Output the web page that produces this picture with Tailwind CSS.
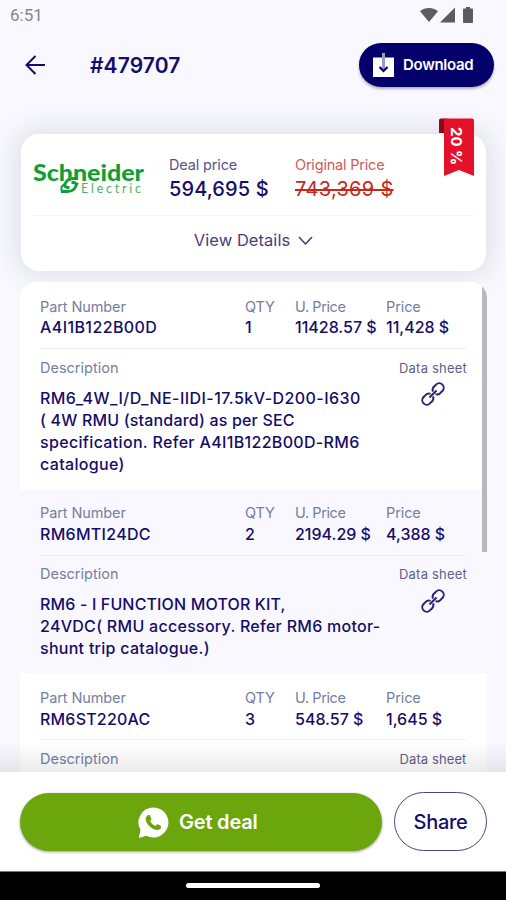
<!DOCTYPE html>
<html lang="en">
  <head>
    <meta charset="UTF-8" />
    <meta name="viewport" content="width=device-width, initial-scale=1.0" />
    <title>Deal #479707</title>
    <script src="https://cdn.jsdelivr.net/npm/@tailwindcss/browser@4"></script>
  </head>
  <body class="bg-black">
    <div
      class="flex h-[900px] w-[506px] flex-col overflow-hidden bg-[#f8f8fe] font-['Inter',sans-serif] text-[#150d68]"
    >
      <!-- Status bar -->
      <div class="flex h-8 shrink-0 items-center justify-between pr-[33px] pl-[10px]">
        <span class="font-['Roboto',sans-serif] text-[17px] text-[#858589]">6:51</span>
        <div class="flex items-center pb-[2px] text-[#5c5c60]">
          <svg class="h-4 w-[18px]" viewBox="0 0 18 16" fill="currentColor">
            <path d="M0 4.200C5.400 0 12.600 0 18 4.200L9 15z" />
          </svg>
          <svg class="ml-[2px] h-4 w-[15px]" viewBox="0 0 15 16" fill="currentColor">
            <path d="M15 0.500V15.500H0z" />
          </svg>
          <svg class="ml-[8px] h-4 w-[10px]" viewBox="0 0 10 16" fill="currentColor">
            <path d="M3 0h4v1.500h2Q10 1.500 10 2.500V15q0 1-1 1H1q-1 0-1-1V2.500Q0 1.500 1 1.500h2z" />
          </svg>
        </div>
      </div>

      <!-- Header -->
      <header class="flex h-[66px] shrink-0 items-center pr-[12px] pl-[25px]">
        <svg class="h-5 w-5" viewBox="0 0 20 20" fill="none" stroke="#150d68" stroke-width="2">
          <path d="M20 10H2M10.500 1L1.500 10l9 9" />
        </svg>
        <h1 class="ml-[45px] pt-[2px] text-[21px] font-semibold tracking-[0.1px]">#479707</h1>
        <button
          class="ml-auto flex h-[44px] w-[135px] items-center rounded-full bg-[#03006c] pl-[14px] text-[15px] font-semibold text-white shadow-[0_2px_3px_rgba(0,0,0,0.3)]"
        >
          <svg class="h-[24px] w-[21px]" viewBox="0 0 21 24" fill="none">
            <path d="M0 4.500h21V24H0z" fill="#fff" />
            <path d="M10.500 0v16" stroke="#9c9bc6" stroke-width="3" />
            <path d="M6.500 14l4 4 4-4" stroke="#03006c" stroke-width="2.200" />
          </svg>
          <span class="ml-[9px] tracking-[-0.3px]">Download</span>
        </button>
      </header>

      <main class="relative min-h-0 flex-1 overflow-hidden pt-[36px] pr-[19px] pl-5">
        <!-- Price summary -->
        <section
          class="relative mx-px h-[137px] rounded-[18px] bg-white px-3 shadow-[0_0_28px_4px_rgba(30,30,50,0.12)]"
        >
          <div class="flex h-[82px] border-b border-[#f3f3f6] pt-[20px]">
            <svg class="mt-[6px] h-[38px] w-[112px] shrink-0 overflow-visible" viewBox="0 0 112 38">
              <text x="0" y="20.500" textLength="111" lengthAdjust="spacingAndGlyphs" font-family="Lato" font-weight="900" font-size="22" fill="#0f9f36">Schneider</text>
              <text x="48" y="32.500" textLength="60" font-family="Lato" font-size="12.500" fill="#4fae68">Electric</text>
              <path d="M28 30Q27 21 34 18.500Q40 16 46 19.500L42 28Q36 34 28 30z" fill="#fff" />
              <g fill="none" stroke="#0f9f36" stroke-width="2.800">
                <path d="M45 18.500H41q-6.500 0-8.500 4.500q-2 4 2 4.500h2" />
                <path d="M28 31.500h6q6.500 0 8.500-4.500q2-4-2-4.500h-2" />
                <path d="M31.500 24l-3 3v4M43 26l2-3" stroke-width="2" />
              </g>
            </svg>
            <div class="ml-[24px] w-[126px]">
              <p class="text-[14.500px] leading-[21px] tracking-[-0.15px] text-[#5a5589]">Deal price</p>
              <p class="mt-[1px] text-[20px] leading-[27px] font-medium tracking-[0.1px]">594,695 $</p>
            </div>
            <div>
              <p class="text-[14.500px] leading-[21px] tracking-[-0.2px] text-[#cd5c58]">Original Price</p>
              <p class="mt-[1px] text-[20px] leading-[27px] tracking-[0.3px] text-[#c5281c] line-through decoration-2">743,369 $</p>
            </div>
          </div>
          <div class="flex h-[49px] items-center justify-center gap-[8px] text-[16.500px] tracking-[0.05px] text-[#46407d]">
            <span>View Details</span>
            <svg class="h-[9px] w-[15px]" viewBox="0 0 15 9" fill="none" stroke="currentColor" stroke-width="1.600">
              <path d="M1 1l6.500 7L14 1" />
            </svg>
          </div>

          <!-- Discount ribbon -->
          <div class="absolute top-[-16px] right-[12px] h-[59px] w-[36px]">
            <svg class="h-full w-full" viewBox="0 0 36 59">
              <path d="M1 2q0-1.500 2-1.500h6V15H1z" fill="#8d0a1a" />
              <path d="M6 0.500H34q2 0 2 2V58l-15-6-15 6z" fill="#e4112a" />
            </svg>
            <span
              class="absolute top-[9px] left-[9px] text-[15px] leading-[18px] font-bold whitespace-nowrap text-white [writing-mode:vertical-rl]"
              >20 %</span
            >
          </div>
        </section>

        <!-- Parts list -->
        <section class="relative mt-[11px] overflow-hidden rounded-t-[16px] bg-white">
          <article class="h-[208px] px-5 pt-[14px]">
            <div class="mr-px grid grid-cols-[205px_50px_91px_1fr] border-b border-[#f0f0f4] pb-[10px] text-[16px] leading-[21px] whitespace-nowrap">
              <span class="text-[14.500px] tracking-[-0.1px] text-[#74809f]">Part Number</span>
              <span class="text-[14.500px] tracking-[-0.1px] text-[#74809f]">QTY</span>
              <span class="text-[14.500px] tracking-[-0.4px] text-[#74809f]">U. Price</span>
              <span class="text-[14.500px] tracking-[-0.1px] text-[#74809f]">Price</span>
              <span class="font-medium tracking-[0.4px]">A4I1B122B00D</span>
              <span class="font-medium">1</span>
              <span class="font-medium">11428.57 $</span>
              <span class="font-medium">11,428 $</span>
            </div>
            <div class="flex justify-between pt-[9px]">
              <div>
                <p class="text-[14.500px] leading-[20px] text-[#74809f]">Description</p>
                <p class="mt-[8.500px] text-[16px] leading-[22.200px] font-medium tracking-[0.33px] whitespace-nowrap">
                  <span class="tracking-[0.45px]">RM6_4W_I/D_NE-IIDI-17.5kV-D200-I630</span><br /><span class="tracking-[0.18px]">( 4W RMU (standard) as per SEC</span><br />specification.
                  Refer A4I1B122B00D-RM6<br />catalogue)
                </p>
              </div>
              <div class="flex w-[68px] shrink-0 flex-col items-center">
                <p class="text-[13px] leading-[20px] tracking-[0.2px] whitespace-nowrap text-[#625d8d]">Data sheet</p>
                <svg class="mt-[4px] h-[24px] w-[24px]" viewBox="0 0 24 24" fill="none" stroke="#2b2474" stroke-width="2">
                  <g transform="rotate(-45 12 12)">
                    <path d="M10.300 10.200A4.500 4.500 0 0 0 6.300 7.500H3.200a4.500 4.500 0 0 0 0 9H6.300a4.500 4.500 0 0 0 4-2.700" />
                    <path d="M13.700 10.200A4.500 4.500 0 0 1 17.700 7.500h3.100a4.500 4.500 0 0 1 0 9H17.700a4.500 4.500 0 0 1-4-2.700" />
                    <path d="M7 12h10" />
                  </g>
                </svg>
              </div>
            </div>
          </article>

          <article class="h-[183px] bg-[#f8f8fe] px-5 pt-[12px]">
            <div class="mr-px grid grid-cols-[205px_50px_91px_1fr] border-b border-[#ededf3] pb-[10px] text-[16px] leading-[21.500px] whitespace-nowrap">
              <span class="text-[14.500px] tracking-[-0.1px] text-[#74809f]">Part Number</span>
              <span class="text-[14.500px] tracking-[-0.1px] text-[#74809f]">QTY</span>
              <span class="text-[14.500px] tracking-[-0.4px] text-[#74809f]">U. Price</span>
              <span class="text-[14.500px] tracking-[-0.1px] text-[#74809f]">Price</span>
              <span class="font-medium tracking-[0.3px]">RM6MTI24DC</span>
              <span class="font-medium">2</span>
              <span class="font-medium">2194.29 $</span>
              <span class="font-medium">4,388 $</span>
            </div>
            <div class="flex justify-between pt-[8px]">
              <div>
                <p class="text-[14.500px] leading-[20px] text-[#74809f]">Description</p>
                <p class="mt-[9px] text-[16px] leading-[22.200px] font-medium tracking-[0.28px] whitespace-nowrap">
                  <span class="tracking-[0.15px]">RM6 - I FUNCTION MOTOR KIT,</span><br />24VDC( RMU accessory. Refer RM6 motor-<br />shunt trip
                  catalogue.)
                </p>
              </div>
              <div class="flex w-[68px] shrink-0 flex-col items-center">
                <p class="text-[13px] leading-[20px] tracking-[0.2px] whitespace-nowrap text-[#625d8d]">Data sheet</p>
                <svg class="mt-[5px] h-[24px] w-[24px]" viewBox="0 0 24 24" fill="none" stroke="#2b2474" stroke-width="2">
                  <g transform="rotate(-45 12 12)">
                    <path d="M10.300 10.200A4.500 4.500 0 0 0 6.300 7.500H3.200a4.500 4.500 0 0 0 0 9H6.300a4.500 4.500 0 0 0 4-2.700" />
                    <path d="M13.700 10.200A4.500 4.500 0 0 1 17.700 7.500h3.100a4.500 4.500 0 0 1 0 9H17.700a4.500 4.500 0 0 1-4-2.700" />
                    <path d="M7 12h10" />
                  </g>
                </svg>
              </div>
            </div>
          </article>

          <article class="h-[183px] px-5 pt-[14px]">
            <div class="mr-px grid grid-cols-[205px_50px_91px_1fr] border-b border-[#f0f0f4] pb-[9px] text-[16px] leading-[21.500px] whitespace-nowrap">
              <span class="text-[14.500px] tracking-[-0.1px] text-[#74809f]">Part Number</span>
              <span class="text-[14.500px] tracking-[-0.1px] text-[#74809f]">QTY</span>
              <span class="text-[14.500px] tracking-[-0.4px] text-[#74809f]">U. Price</span>
              <span class="text-[14.500px] tracking-[-0.1px] text-[#74809f]">Price</span>
              <span class="font-medium tracking-[0.2px]">RM6ST220AC</span>
              <span class="font-medium">3</span>
              <span class="font-medium">548.57 $</span>
              <span class="font-medium">1,645 $</span>
            </div>
            <div class="flex justify-between pt-[9px]">
              <p class="text-[14.500px] leading-[20px] text-[#74809f]">Description</p>
              <p class="w-[68px] text-center text-[13px] leading-[20px] tracking-[0.1px] whitespace-nowrap text-[#625d8d]">Data sheet</p>
            </div>
          </article>

          <!-- Scroll thumb -->
          <div class="absolute top-0 right-0 h-[270px] w-[5px] bg-[#b9b9bb]"></div>
        </section>

        <div class="absolute inset-x-0 bottom-0 h-[30px] bg-linear-to-b from-transparent to-black/8"></div>
      </main>

      <!-- Actions -->
      <footer class="flex h-[99px] shrink-0 gap-[12px] bg-white px-5 pt-[20px]">
        <button
          class="mt-px flex h-[58px] w-[362px] shrink-0 items-center rounded-full bg-[#6ca60d] pl-[118px] text-[20px] font-semibold tracking-[-0.2px] text-white shadow-[0_1px_3px_rgba(0,0,0,0.4)]"
        >
          <svg class="h-[31px] w-[31px]" viewBox="0 0 31 31">
            <path d="M15.500 0.500a15 15 0 1 1-7 28.300L0.800 31l1.700-8A15 15 0 0 1 15.500 0.500z" fill="#fff" />
            <path
              d="M9.200 8.800c1-1.300 2.300-1.200 2.900 0l1.300 2.900c.3.700-.9 1.900-1.300 2.400 1.200 2.300 2.900 3.900 5.300 4.900.7-.7 1.500-2 2.200-1.800l3 1.500c1 .6.4 2.300-.5 3.200-2 1.900-5.500.9-8.100-.7-2.600-1.700-5.100-4.500-6-7.200-.6-2-.2-3.900 1.200-5.200z"
              fill="#6ca60d"
            />
          </svg>
          <span class="ml-[10px]">Get deal</span>
        </button>
        <button class="h-[59px] w-[93px] shrink-0 rounded-full border border-[#4a4486] text-[20px] font-medium tracking-[-0.3px]">
          Share
        </button>
      </footer>

      <!-- System navigation -->
      <div class="flex h-[29px] shrink-0 justify-center border-t border-[#777] bg-black pt-[11px]">
        <div class="h-[5px] w-[134px] rounded-full bg-white"></div>
      </div>
    </div>
  </body>
</html>
